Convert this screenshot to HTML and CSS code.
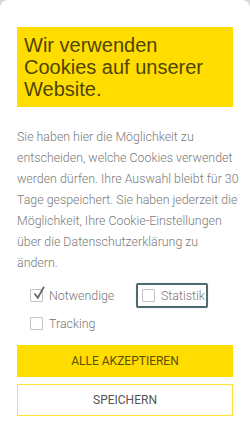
FILE: index.html
```html
<!DOCTYPE html>
<html lang="de">
<head>
<meta charset="utf-8">
<link rel="stylesheet" href="styles.css">
</head>
<body>
<div class="card">
  <h1 class="title">Wir verwenden Cookies auf unserer Website.</h1>
  <p class="text">Sie haben hier die Möglichkeit zu entscheiden, welche Cookies verwendet werden dürfen. Ihre Auswahl bleibt für 30 Tage gespeichert. Sie haben jederzeit die Möglichkeit, Ihre Cookie-Einstellungen über die Datenschutzerklärung zu ändern.</p>
  <div class="options">
    <label class="opt opt-first"><span class="box checked"><svg class="tick" viewBox="0 0 16 16" width="16" height="16"><path d="M3.5 8.5 L6.8 12.8 L13 1.8" fill="none" stroke="#6a6a6a" stroke-width="1.8" stroke-linejoin="miter"/></svg></span><span class="lbl">Notwendige</span></label>
    <label class="opt focus"><span class="box"></span><span class="lbl">Statistik</span></label>
    <label class="opt opt-first"><span class="box"></span><span class="lbl">Tracking</span></label>
  </div>
  <button class="btn btn-primary">Alle akzeptieren</button>
  <button class="btn btn-secondary">Speichern</button>
</div>
</body>
</html>
```
FILE: styles.css
```css
html, body {
  margin: 0;
  padding: 0;
  background: #d9d9d9;
}
.card {
  background: #fff;
  border-radius: 8px 8px 0 0;
  min-height: 445px;
  box-sizing: border-box;
  padding: 27px 17px 0 17px;
}
.title {
  margin: 0;
  background: #ffdd00;
  color: #4f4500;
  font-family: "Liberation Sans", Arial, sans-serif;
  font-weight: normal;
  font-size: 20px;
  line-height: 22px;
  padding: 7px 7px;
}
.text {
  margin: 19px -8px 0 0;
  font-family: Roboto, sans-serif;
  font-weight: 300;
  font-size: 12.4px;
  line-height: 21px;
  color: #7a7a7a;
}
.options {
  margin-top: 10px;
  padding-left: 7px;
  display: grid;
  grid-template-columns: 106px auto;
  column-gap: 6px;
  row-gap: 3px;
  justify-content: start;
}
.opt {
  display: flex;
  align-items: center;
  gap: 6px;
  border: 2px solid transparent;
  border-radius: 2px;
  padding: 3px 1px 3px 4px;
  line-height: 15px;
  font-family: Roboto, sans-serif;
  font-weight: 300;
  font-size: 12.4px;
  color: #777;
}
.opt.focus {
  border-color: #4d6c72;
  box-shadow: 0 0 1px #9ab;
}
.opt-first {
  grid-column: 1;
}
.box {
  position: relative;
  width: 13px;
  height: 13px;
  box-sizing: border-box;
  border: 1px solid #c4c4c4;
  border-radius: 1px;
  background: #fff;
  flex: none;
}
.tick {
  position: absolute;
  left: 0px;
  top: -5px;
}
.btn {
  display: block;
  width: 100%;
  height: 32px;
  box-sizing: border-box;
  font-family: Roboto, sans-serif;
  font-size: 12px;
  text-transform: uppercase;
  cursor: pointer;
}
.btn-primary {
  margin-top: 9px;
  background: #ffdd00;
  border: 1px solid #ffdd00;
  color: #5b4f00;
}
.btn-secondary {
  margin-top: 7px;
  background: #fff;
  border: 1px solid #ffe033;
  color: #555;
}
```
